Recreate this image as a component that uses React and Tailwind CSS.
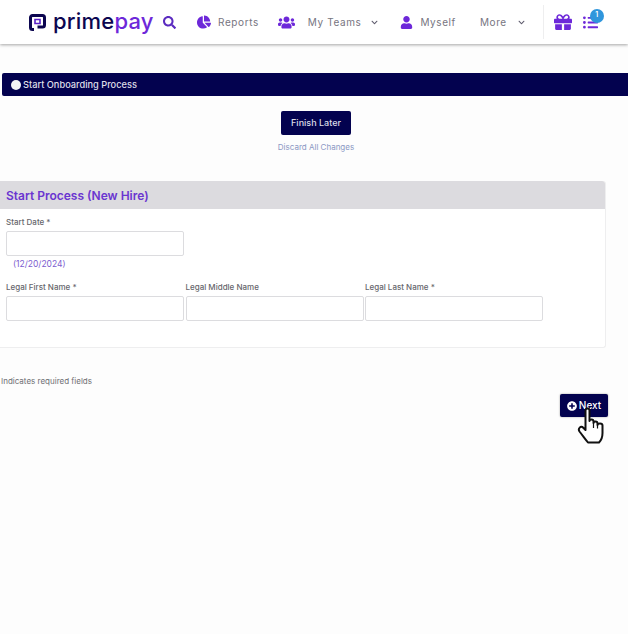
import React from "react";
import {
  FaChartPie,
  FaChevronDown,
  FaGift,
  FaListUl,
  FaPlusCircle,
  FaSearch,
  FaUser,
  FaUsers,
} from "react-icons/fa";

function LogoMark() {
  return (
    <svg width="17" height="17" viewBox="0 0 17 17" fill="none">
      <path
        d="M5 15.5H3.5A2 2 0 0 1 1.5 13.5V3.5A2 2 0 0 1 3.5 1.5H13.5A2 2 0 0 1 15.5 3.5V11A2 2 0 0 1 13.5 13H8.5"
        stroke="#0c0650"
        strokeWidth="3"
      />
      <path d="M6 5.5H11V9.5H6Z" fill="none" stroke="#5b21c9" strokeWidth="1.6" />
    </svg>
  );
}

function HandCursor() {
  return (
    <svg width="28" height="37" viewBox="0 0 28 37" fill="#fff" stroke="#111" strokeWidth="2" strokeLinejoin="round">
      <path d="M8.5 3.5C8.5 .8 12.5 .8 12.5 3.5V14C12.5 12 16.5 12 16.5 14.5V16C16.5 14 20.5 14 20.5 16.5V18C20.5 16 25.5 16 25.5 18.5V26C25.5 31 23.5 34 22 35.5H11C9 33 6 29 2.5 24.5C.5 21.5 4 18.5 6 20.5L8.5 23Z" />
      <path d="M16.5 16V21M20.5 18V21.5" fill="none" strokeWidth="1.2" />
    </svg>
  );
}

function NavLabel({ children, className = "" }) {
  return (
    <span className={`text-[10px] leading-[14px] tracking-[0.6px] text-[#77757f] ${className}`}>{children}</span>
  );
}

function Field({ label }) {
  return (
    <div className="w-[178px]">
      <label className="block h-[16px] pt-px text-[8px] leading-[15px] font-medium text-[#66666c]">{label}</label>
      <input
        type="text"
        className="block w-[178px] h-[25px] mt-px bg-white border border-[#dcdcdf] rounded-[2px]"
      />
    </div>
  );
}

const App = () => {
  return (
    <div className="relative w-[628px] h-[634px] overflow-hidden bg-[#fdfdfd] font-['Inter',sans-serif]">
      <header className="flex items-center h-[44px] bg-white shadow-[0_1px_3px_rgba(0,0,0,0.35)]">
        <div className="flex items-center ml-[29px] w-[125px] gap-[7px]">
          <LogoMark />
          <span className="text-[22px] leading-[24px] -mt-[2px] font-medium tracking-[0.2px] text-[#0c0650]">
            prime<span className="text-[#6d28d9]">pay</span>
          </span>
        </div>
        <FaSearch className="ml-[9px] text-[#5b2bc0]" size={13} />
        <FaChartPie className="ml-[21px] text-[#6d28d9]" size={14} />
        <NavLabel className="ml-[7px]">Reports</NavLabel>
        <FaUsers className="ml-[19px] text-[#6d28d9]" size={17} />
        <NavLabel className="ml-[13px]">My Teams</NavLabel>
        <FaChevronDown className="ml-[10px] text-[#5f5c6e]" size={7} />
        <FaUser className="ml-[22px] text-[#6d28d9]" size={13} />
        <NavLabel className="ml-[7px]">Myself</NavLabel>
        <NavLabel className="ml-[24px]">More</NavLabel>
        <FaChevronDown className="ml-[11px] text-[#5f5c6e]" size={7} />
        <div className="ml-[18px] w-px h-[34px] bg-[#eeeeef]" />
        <FaGift className="ml-[10px] text-[#6d28d9]" size={18} />
        <div className="relative ml-[11px]">
          <FaListUl className="text-[#6d28d9]" size={15} />
          <span className="absolute -top-[6px] left-[7px] flex items-center justify-center w-[14px] h-[14px] rounded-full bg-[#2f96dc] text-[7px] font-semibold text-white">
            1
          </span>
        </div>
      </header>

      <div className="flex items-center h-[23px] mt-[29px] ml-[2px] pl-[9px] gap-[2px] bg-[#03024f] rounded-l-[2px]">
        <span className="w-[10px] h-[10px] rounded-full bg-[#f4f4f6]" />
        <span className="pt-px text-[9.25px] font-medium text-[#dfdfe8]">Start Onboarding Process</span>
      </div>

      <div className="flex flex-col items-center mt-[15px] pl-[4px]">
        <button className="w-[70px] h-[24px] bg-[#03024f] rounded-[2px] text-[9px] font-medium text-[#dcdce8]">
          Finish Later
        </button>
        <a className="mt-[6px] text-[8px] leading-[12px] text-[#8b98c4]">Discard All Changes</a>
      </div>

      <section className="w-[606px] h-[167px] mt-[28px] bg-white border-r border-b border-[#eeeeef] rounded-r-[3px]">
        <div className="flex items-center h-[28px] pl-[6px] pt-px bg-[#dcdbdf] rounded-tr-[3px]">
          <h2 className="text-[12px] font-semibold text-[#6a35d0]">Start Process (New Hire)</h2>
        </div>
        <div className="px-[6px] pt-[5px]">
          <Field label="Start Date *" />
          <div className="mt-[2px] ml-[7px] h-[12px] text-[8.5px] leading-[12px] text-[#7c5ccf]">(12/20/2024)</div>
          <div className="flex gap-[1.5px] mt-[9px]">
            <Field label="Legal First Name *" />
            <Field label="Legal Middle Name" />
            <Field label="Legal Last Name *" />
          </div>
        </div>
      </section>

      <p className="mt-[27px] ml-px text-[8px] leading-[12px] text-[#6f6f74]">Indicates required fields</p>

      <div className="flex justify-end mt-[7px] pr-[20px]">
        <button className="relative flex items-center justify-center gap-[2px] w-[48px] h-[23px] bg-[#03024f] rounded-[2px] shadow-[0_0_2px_rgba(0,0,0,0.4)] text-[10px] font-medium text-white">
          <FaPlusCircle size={10} />
          Next
          <span className="absolute left-[17px] top-[13px]">
            <HandCursor />
          </span>
        </button>
      </div>
    </div>
  );
};

export default App;
